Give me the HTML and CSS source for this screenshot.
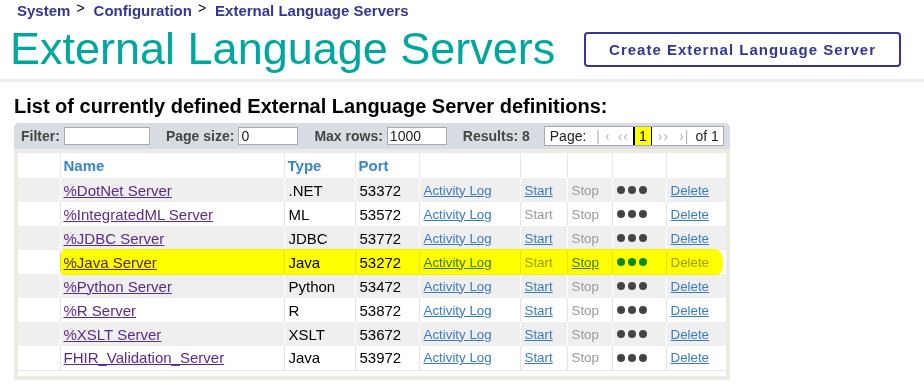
FILE: index.html
```html
<!DOCTYPE html>
<html lang="en">
<head>
  <meta charset="UTF-8" />
  <meta name="viewport" content="width=device-width, initial-scale=1.0"/>
  <title>External Language Servers</title>
  <link rel="stylesheet" href="styles.css">
</head>
<body>
  <div class="breadcrumb">
    <a href="#">System</a><span class="sep">&gt;</span><a href="#">Configuration</a><span class="sep">&gt;</span><a href="#">External Language Servers</a>
  </div>

  <div class="title-bar">
    <h1>External Language Servers</h1>
    <button class="create-btn">Create External Language Server</button>
  </div>

  <div class="content">
    <h2>List of currently defined External Language Server definitions:</h2>

    <div class="filter-bar">
      <label>Filter:</label>
      <input type="text" class="filter-input" value="">
      <label>Page size:</label>
      <input type="text" class="small-input" value="0">
      <label>Max rows:</label>
      <input type="text" class="small-input" value="1000">
      <span class="results">Results: 8</span>
      <div class="pager">
        <span>Page:</span>
        <span class="nav first">|&lsaquo;</span>
        <span class="nav prev">&lsaquo;&lsaquo;</span>
        <span class="current">1</span>
        <span class="nav next">&rsaquo;&rsaquo;</span>
        <span class="nav last">&rsaquo;|</span>
        <span class="of">of 1</span>
      </div>
    </div>

    <div class="table-wrap">
      <table class="servers">
        <colgroup>
          <col style="width: 42px">
          <col style="width: 224px">
          <col style="width: 71px">
          <col style="width: 64px">
          <col style="width: 101px">
          <col style="width: 47px">
          <col style="width: 45px">
          <col style="width: 54px">
          <col style="width: 60px">
        </colgroup>
        <thead>
          <tr>
            <th></th>
            <th>Name</th>
            <th>Type</th>
            <th>Port</th>
            <th></th>
            <th></th>
            <th></th>
            <th></th>
            <th></th>
          </tr>
        </thead>
        <tbody>
          <tr class="odd">
            <td></td>
            <td><a class="name" href="#">%DotNet Server</a></td>
            <td>.NET</td>
            <td>53372</td>
            <td class="act"><a href="#">Activity Log</a></td>
            <td class="act"><a href="#">Start</a></td>
            <td class="act"><span class="off">Stop</span></td>
            <td><span class="dots"><i></i><i></i><i></i></span></td>
            <td class="act"><a href="#">Delete</a></td>
          </tr>
          <tr class="even">
            <td></td>
            <td><a class="name" href="#">%IntegratedML Server</a></td>
            <td>ML</td>
            <td>53572</td>
            <td class="act"><a href="#">Activity Log</a></td>
            <td class="act"><span class="off">Start</span></td>
            <td class="act"><span class="off">Stop</span></td>
            <td><span class="dots"><i></i><i></i><i></i></span></td>
            <td class="act"><a href="#">Delete</a></td>
          </tr>
          <tr class="odd">
            <td></td>
            <td><a class="name" href="#">%JDBC Server</a></td>
            <td>JDBC</td>
            <td>53772</td>
            <td class="act"><a href="#">Activity Log</a></td>
            <td class="act"><a href="#">Start</a></td>
            <td class="act"><span class="off">Stop</span></td>
            <td><span class="dots"><i></i><i></i><i></i></span></td>
            <td class="act"><a href="#">Delete</a></td>
          </tr>
          <tr class="even">
            <td></td>
            <td><a class="name" href="#">%Java Server</a></td>
            <td>Java</td>
            <td>53272</td>
            <td class="act"><a href="#">Activity Log</a></td>
            <td class="act"><span class="off">Start</span></td>
            <td class="act"><a href="#">Stop</a></td>
            <td><span class="dots running"><i></i><i></i><i></i></span></td>
            <td class="act"><span class="off">Delete</span></td>
          </tr>
          <tr class="odd">
            <td></td>
            <td><a class="name" href="#">%Python Server</a></td>
            <td>Python</td>
            <td>53472</td>
            <td class="act"><a href="#">Activity Log</a></td>
            <td class="act"><a href="#">Start</a></td>
            <td class="act"><span class="off">Stop</span></td>
            <td><span class="dots"><i></i><i></i><i></i></span></td>
            <td class="act"><a href="#">Delete</a></td>
          </tr>
          <tr class="even">
            <td></td>
            <td><a class="name" href="#">%R Server</a></td>
            <td>R</td>
            <td>53872</td>
            <td class="act"><a href="#">Activity Log</a></td>
            <td class="act"><a href="#">Start</a></td>
            <td class="act"><span class="off">Stop</span></td>
            <td><span class="dots"><i></i><i></i><i></i></span></td>
            <td class="act"><a href="#">Delete</a></td>
          </tr>
          <tr class="odd">
            <td></td>
            <td><a class="name" href="#">%XSLT Server</a></td>
            <td>XSLT</td>
            <td>53672</td>
            <td class="act"><a href="#">Activity Log</a></td>
            <td class="act"><a href="#">Start</a></td>
            <td class="act"><span class="off">Stop</span></td>
            <td><span class="dots"><i></i><i></i><i></i></span></td>
            <td class="act"><a href="#">Delete</a></td>
          </tr>
          <tr class="even">
            <td></td>
            <td><a class="name" href="#">FHIR_Validation_Server</a></td>
            <td>Java</td>
            <td>53972</td>
            <td class="act"><a href="#">Activity Log</a></td>
            <td class="act"><a href="#">Start</a></td>
            <td class="act"><span class="off">Stop</span></td>
            <td><span class="dots"><i></i><i></i><i></i></span></td>
            <td class="act"><a href="#">Delete</a></td>
          </tr>
        </tbody>
      </table>
      <!-- marker highlight drawn over the running server row -->
      <div class="highlight"></div>
    </div>
  </div>
</body>
</html>
```

FILE: styles.css
```css
* {
  box-sizing: border-box;
}

body {
  margin: 0;
  font-family: "Liberation Sans", Arial, sans-serif;
  color: #000;
  background: #ffffff;
}

/* breadcrumb */
.breadcrumb {
  height: 19px;
  padding: 1px 0 0 17px;
  font-size: 15px;
  line-height: 18px;
  font-weight: bold;
  overflow: hidden;
}

.breadcrumb a {
  color: #333695;
  text-decoration: none;
}

.breadcrumb .sep {
  display: inline-block;
  font-size: 14px;
  line-height: 14px;
  font-weight: normal;
  color: #000;
  margin: 0 9px 0 6px;
  vertical-align: 3px;
}

/* title row */
.title-bar {
  display: flex;
  align-items: center;
  justify-content: space-between;
  padding: 4px 23px 4px 10px;
  border-bottom: 3px solid #ececec;
}

.title-bar h1 {
  margin: 0;
  font-size: 45px;
  line-height: 52px;
  font-weight: normal;
  color: #00a79e;
}

.create-btn {
  height: 35px;
  padding: 0 23px;
  border: 2px solid #333695;
  border-radius: 4px;
  background: #fff;
  color: #333695;
  font-family: inherit;
  font-size: 15px;
  font-weight: bold;
  letter-spacing: 1px;
  cursor: pointer;
}

/* list area */
.content {
  padding-left: 14px;
}

.content h2 {
  margin: 13px 0 5px;
  font-size: 20px;
  line-height: 23px;
  font-weight: bold;
}

.filter-bar {
  display: flex;
  align-items: center;
  width: 716px;
  height: 26px;
  padding-left: 7px;
  background: #d8dde4;
  border-radius: 5px 5px 0 0;
  font-size: 14px;
  font-weight: bold;
  color: #454545;
}

.filter-bar label {
  margin-right: 4px;
}

.filter-bar input {
  height: 18px;
  padding: 0 2px;
  margin-right: 16px;
  border: 1px solid #a9a9a9;
  font-family: inherit;
  font-size: 14px;
  color: #222;
  background: #fff;
}

.filter-input {
  width: 86px;
}

.small-input {
  width: 60px;
}

.results {
  margin-right: 14px;
}

.pager {
  display: flex;
  align-items: stretch;
  height: 20px;
  width: 180px;
  padding-left: 5px;
  border: 1px solid #a9a9a9;
  background: #fff;
  font-weight: normal;
  color: #222;
  line-height: 18px;
}

.pager .nav {
  color: #b4b4b4;
  font-size: 14px;
  letter-spacing: 1px;
}

.pager .first { margin-left: 10px; letter-spacing: 5px; }
.pager .prev { margin-left: 3px; }
.pager .next { margin-left: 6px; }
.pager .last { margin-left: 10px; }
.pager .of { margin-left: 6px; }

.pager .current {
  margin-left: 4px;
  padding: 0 4px;
  background: #ffff00;
  border-left: 2px solid #000;
  border-right: 1px solid #000;
  color: #000;
}

/* table */
.table-wrap {
  position: relative;
  width: 716px;
  padding-bottom: 5px;
  border: 4px solid #ecebe2;
  background: #fff;
}

.servers {
  width: 708px;
  border-collapse: collapse;
  table-layout: fixed;
  font-size: 15px;
}

.servers th {
  height: 25px;
  padding: 0 3px;
  text-align: left;
  color: #3a86c6;
  font-weight: bold;
  border-right: 1px solid #e8e8e2;
}

.servers td {
  height: 24px;
  padding: 0 3px 0 4px;
  border-right: 1px solid #e4e4e4;
  white-space: nowrap;
}

.servers th:last-child,
.servers td:last-child {
  border-right: none;
}

.servers td:nth-child(2) {
  padding-left: 3px;
}

.servers tr.odd td {
  background: #efefef;
  border-right-color: #fff;
}

.servers tr:last-child td {
  border-bottom: 1px solid #e4e4e4;
}

.servers a {
  color: #3a7cc4;
}

.servers a.name {
  color: #5b2a8e;
}

.servers td.act {
  font-size: 13.33px;
}

.off {
  color: #999;
}

.dots {
  display: flex;
  gap: 3px;
}

.dots i {
  width: 8px;
  height: 8px;
  border-radius: 50%;
  background: #444;
}

.dots.running i {
  background: #0a8a0a;
}

.highlight {
  position: absolute;
  left: 42px;
  top: 96px;
  width: 663px;
  height: 26px;
  background: #ffff00;
  border-radius: 4px 8px 6px 3px / 10px 12px 10px 8px;
  mix-blend-mode: multiply;
  pointer-events: none;
}
```
